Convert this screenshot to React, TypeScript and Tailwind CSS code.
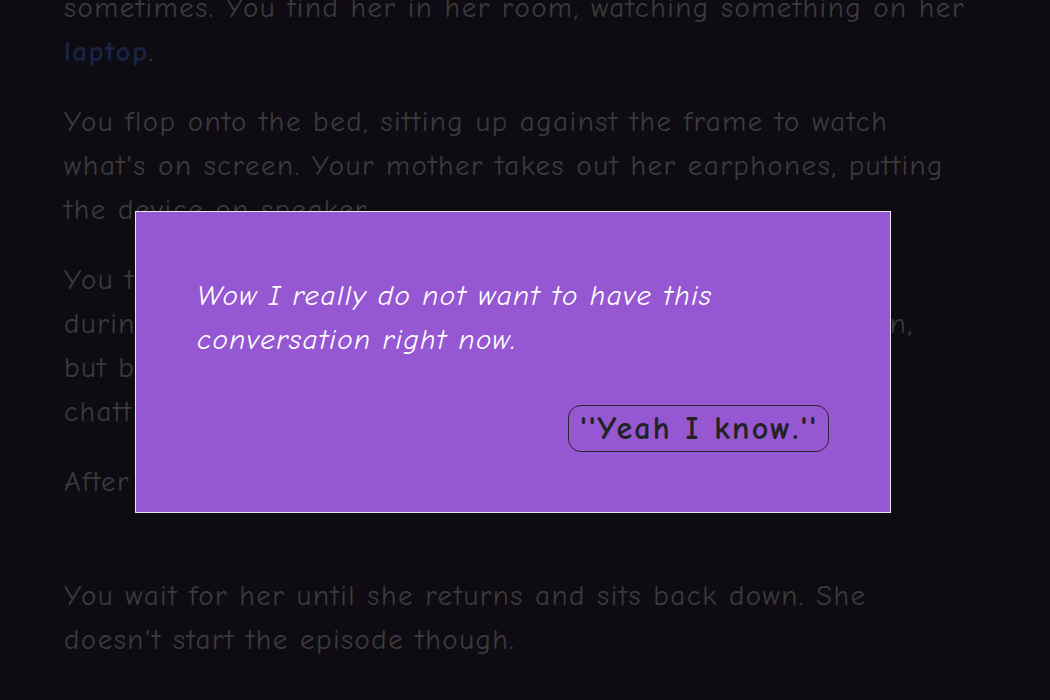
import React from "react";

const font = { fontFamily: "'Comic Sans MS', 'Comic Neue', 'DejaVu Sans', sans-serif" };

export default function App() {
  return (
    <div className="relative w-[1050px] h-[700px] overflow-hidden bg-[#0e0c12]" style={font}>
      <div className="pl-[64px] pr-[40px] text-[29px] tracking-[1.5px] leading-[44px] text-[#3b3b3b] whitespace-nowrap">
        <p className="mt-[-14px]">
          sometimes. You find her in her room, watching something on her
          <br />
          <a className="text-[#1a2444] font-bold">laptop</a>.
        </p>
        <p className="mt-[26px]">
          You flop onto the bed, sitting up against the frame to watch
          <br />
          what's on screen. Your mother takes out her earphones, putting
          <br />
          the device on speaker.
        </p>
        <p className="mt-[26px]">
          You try to remember the last time you watched something
          <br />
          during the summers, back when she was still on her vacation,
          <br />
          but before you can say anything she has already started
          <br />
          chatting about the show and its characters.
        </p>
        <p className="mt-[26px] mb-[70px]">After a while she pauses it and gets up to grab a drink.</p>
        <p>
          You wait for her until she returns and sits back down. She
          <br />
          doesn't start the episode though.
        </p>
      </div>

      <div className="absolute left-[135px] top-[211px] w-[756px] h-[302px] border border-[#e8e4ee] bg-[#9557d2] px-[61px] pt-[62px]">
        <p className="text-white italic text-[29px] tracking-[1.4px] leading-[44px]">
          Wow I really do not want to have this
          <br />
          conversation right now.
        </p>
        <div className="flex justify-end mt-[43px]">
          <button className="h-[47px] pl-[11px] pr-[10px] rounded-[13px] border border-[#2a2230] text-[#222] font-bold text-[32px] tracking-[2.2px] leading-[36px] whitespace-nowrap">
            ''Yeah I know.''
          </button>
        </div>
      </div>
    </div>
  );
}
